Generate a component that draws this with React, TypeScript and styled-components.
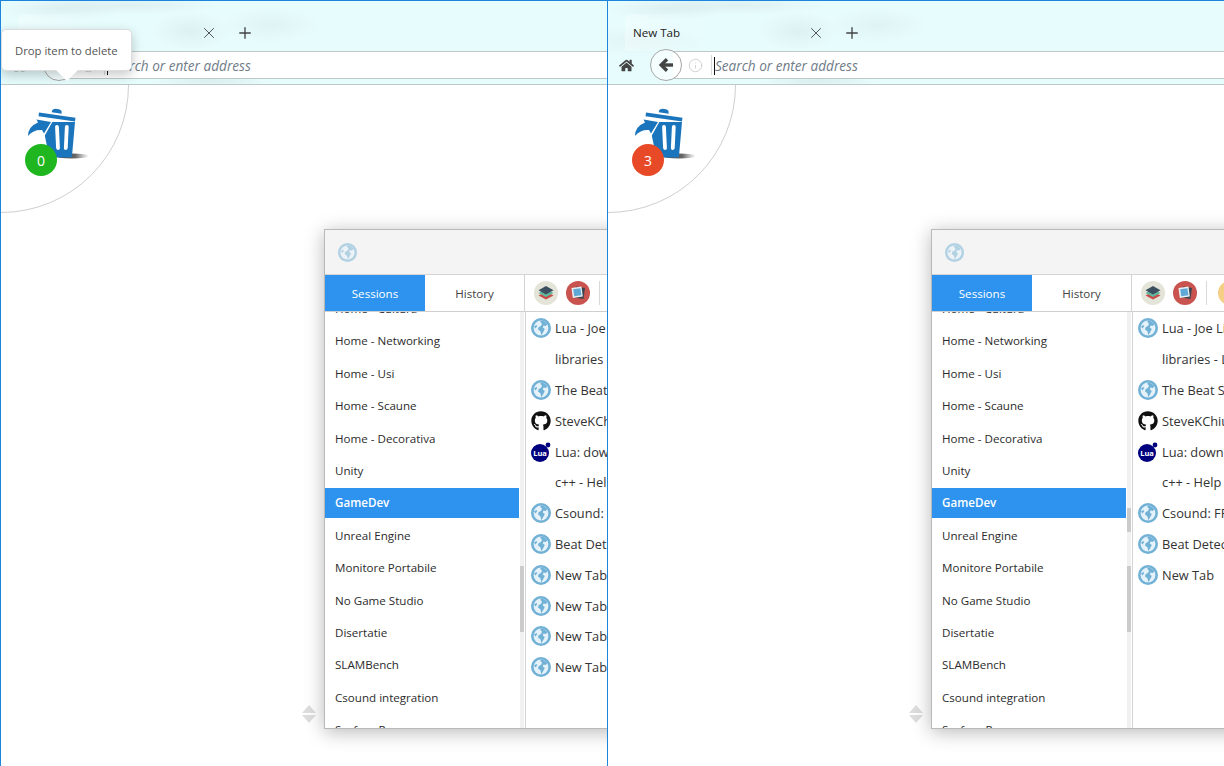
import React, { FC } from "react";
import styled, { createGlobalStyle } from "styled-components";
import { FaGithub, FaHome } from "react-icons/fa";
import { Info, Plus, X } from "lucide-react";

const blue = "#2e93ee";
const edge = "#1b84dc";

const GlobalStyle = createGlobalStyle`
  * { box-sizing: border-box; }
  html, body { margin: 0; height: 100%; overflow: hidden; background: #fff; }
  body { font-family: "Open Sans", "Liberation Sans", sans-serif; color: #333; }
`;

const Page = styled.div`
  display: grid;
  grid-template-columns: 607px 617px;
  height: 766px;
  width: 1224px;
`;

const Pane = styled.section`
  position: relative;
  display: flex;
  flex-direction: column;
  overflow: hidden;
  border-top: 1px solid ${edge};
  border-left: 1px solid ${edge};
`;

const Chrome = styled.header`
  flex: 0 0 84px;
  border-bottom: 1px solid #bccaca;
  background:
    radial-gradient(ellipse 60px 12px at 60px 8px, rgba(205, 220, 220, 0.35), transparent),
    radial-gradient(ellipse 40px 20px at 190px 30px, rgba(205, 220, 220, 0.35), transparent),
    radial-gradient(ellipse 90px 10px at 130px 4px, rgba(205, 220, 220, 0.35), transparent),
    radial-gradient(ellipse 50px 18px at 270px 24px, rgba(205, 222, 222, 0.3), transparent),
    radial-gradient(ellipse 70px 16px at 30px 40px, rgba(210, 226, 226, 0.3), transparent),
    radial-gradient(ellipse 60px 6px at 210px 80px, rgba(205, 220, 220, 0.45), transparent),
    #e7fcfd;
`;

const TabRow = styled.div`
  display: flex;
  align-items: flex-end;
  height: 50px;
`;

const Tab = styled.div`
  display: flex;
  align-items: center;
  justify-content: space-between;
  width: 200px;
  height: 37px;
  margin-left: 17px;
  padding: 0 0 0 8px;
  border-radius: 8px 8px 0 0;
  font-size: 11.6px;
  color: #222;
  background: linear-gradient(to right, rgba(255, 255, 255, 0.3), rgba(255, 255, 255, 0) 40%);
`;

const TabLabel = styled.span`
  margin-top: -1px;
`;

const NewTab = styled.div`
  display: flex;
  align-items: center;
  height: 37px;
  margin-left: 18px;
  color: #444;
`;

const AddressRow = styled.div`
  display: flex;
  align-items: center;
  height: 28px;
`;

const HomeButton = styled.div`
  display: flex;
  margin-left: 11px;
  color: #444;
`;

const BackButton = styled.div`
  position: relative;
  z-index: 1;
  display: flex;
  flex: 0 0 32px;
  align-items: center;
  justify-content: center;
  height: 32px;
  margin-left: 16px;
  border: 1px solid #a6a6a6;
  border-radius: 50%;
  color: #444;
  background: rgba(255, 255, 255, 0.55);
`;

const AddressField = styled.div`
  display: flex;
  flex: 1;
  align-items: center;
  height: 28px;
  margin-left: -9px;
  padding-left: 15px;
  border-top: 1px solid #bfc8c8;
  border-bottom: 1px solid #bfc8c8;
  background: #fff;
`;

const FieldDivider = styled.div`
  width: 1px;
  height: 20px;
  margin: 0 2px 0 8px;
  background: #d8d8d8;
`;

const Placeholder = styled.span`
  position: relative;
  top: 0.5px;
  border-left: 1px solid #111;
  font-size: 13.6px;
  font-style: italic;
  line-height: 18px;
  color: #6f7c88;
`;

const Desk = styled.main`
  position: relative;
  flex: 1;
  overflow: hidden;
  background: #fff;
`;

const Corner = styled.div`
  position: absolute;
  top: -128px;
  left: -128px;
  width: 256px;
  height: 256px;
  border: 1px solid #cfcfcf;
  border-radius: 50%;
`;

const TrashIcon = styled.svg`
  position: absolute;
  top: 20px;
  left: 24px;
`;

const Badge = styled.div<{ $count: number }>`
  position: absolute;
  top: 59px;
  left: 24px;
  display: flex;
  align-items: center;
  justify-content: center;
  width: 32px;
  height: 32px;
  border-radius: 50%;
  font-size: 14px;
  color: #fff;
  background: ${(p) => (p.$count > 0 ? "#e84a27" : "#1fb61f")};
`;

const Tooltip = styled.div`
  position: absolute;
  z-index: 3;
  top: 28px;
  left: 0;
  width: 131px;
  height: 42px;
  padding: 0 13px;
  border: 1px solid #dcdcdc;
  border-radius: 5px;
  font-size: 11.3px;
  line-height: 41px;
  white-space: nowrap;
  color: #555;
  background: #fff;
  box-shadow: 0 4px 12px rgba(0, 0, 0, 0.22);

  &::after {
    content: "";
    position: absolute;
    top: 40px;
    left: 54px;
    border-top: 11px solid #fff;
    border-right: 11px solid transparent;
    border-left: 11px solid transparent;
  }
`;

const Sorter = styled.svg`
  position: absolute;
  top: 619px;
  left: 300px;
`;

const Panel = styled.div`
  position: absolute;
  top: 144px;
  left: 323px;
  display: flex;
  flex-direction: column;
  width: 420px;
  height: 500px;
  border: 1px solid #b9b9b9;
  background: #fff;
  box-shadow: 0 3px 18px rgba(0, 0, 0, 0.28);
`;

const PanelTop = styled.div`
  display: flex;
  flex: 0 0 45px;
  align-items: center;
  padding-left: 13px;
  border-bottom: 1px solid #d4d4d4;
  background: #f4f4f4;
`;

const PanelTabs = styled.div`
  display: flex;
  flex: 0 0 37px;
  align-items: stretch;
  border-bottom: 1px solid #cfcfcf;
`;

const PanelTab = styled.div<{ $active?: boolean }>`
  display: flex;
  flex: 0 0 ${(p) => (p.$active ? 100 : 99)}px;
  align-items: center;
  justify-content: center;
  font-size: 11.6px;
  color: ${(p) => (p.$active ? "#fff" : "#444")};
  background: ${(p) => (p.$active ? blue : "#fff")};
`;

const Toolbar = styled.div`
  display: flex;
  flex: 1;
  align-items: center;
  gap: 8px;
  padding-left: 9px;
  border-left: 1px solid #d4d4d4;
`;

const ToolDivider = styled.div`
  width: 1px;
  height: 24px;
  margin: 0 3px 0 1px;
  background: #d8d8d8;
`;

const Tool = styled.div<{ $color: string }>`
  display: flex;
  flex: 0 0 24px;
  height: 24px;
  border-radius: 50%;
  background: ${(p) => p.$color};
`;

const PanelBody = styled.div`
  display: flex;
  flex: 1;
  min-height: 0;
`;

const SessionList = styled.ul`
  flex: 0 0 194px;
  margin: 0;
  padding: 0;
  overflow: hidden;
  list-style: none;
`;

const SessionRow = styled.li<{ $selected?: boolean; $first?: boolean }>`
  height: 30px;
  margin-top: ${(p) => (p.$first ? -18 : 0)}px;
  margin-bottom: 2.4px;
  padding-left: 10px;
  font-size: 11.6px;
  font-weight: ${(p) => (p.$selected ? 600 : 400)};
  line-height: 30px;
  white-space: nowrap;
  color: ${(p) => (p.$selected ? "#fff" : "#2c2c2c")};
  background: ${(p) => (p.$selected ? blue : "transparent")};
`;

const ScrollTrack = styled.div`
  display: flex;
  flex: 0 0 4px;
  flex-direction: column;
  margin-left: 1px;
  margin-right: 1px;
  background: #f1f1f1;
`;

const ScrollThumb = styled.div<{ $top: number; $height: number }>`
  flex: 0 0 ${(p) => p.$height}px;
  margin-top: ${(p) => p.$top}px;
  background: #cbcbcb;
`;

const TabList = styled.ul`
  flex: 1;
  margin: 0;
  padding: 1px 0 0 5px;
  overflow: hidden;
  border-left: 1px solid #d4d4d4;
  list-style: none;
`;

const TabItem = styled.li`
  display: flex;
  align-items: center;
  gap: 4px;
  height: 30.8px;
  font-size: 12.8px;
  white-space: nowrap;
  color: #333;
`;

const IconSlot = styled.span`
  display: flex;
  flex: 0 0 20px;
  align-items: center;
  justify-content: center;
  height: 20px;
  color: #111;
`;

const Faded = styled.span`
  display: flex;
  opacity: 0.5;
`;

type IconKind = "globe" | "github" | "lua" | "none";

const sessions = [
  "Home - Cultura",
  "Home - Networking",
  "Home - Usi",
  "Home - Scaune",
  "Home - Decorativa",
  "Unity",
  "GameDev",
  "Unreal Engine",
  "Monitore Portabile",
  "No Game Studio",
  "Disertatie",
  "SLAMBench",
  "Csound integration",
  "Surface Pro",
];

const savedTabs: { icon: IconKind; title: string }[] = [
  { icon: "globe", title: "Lua - Joe Library" },
  { icon: "none", title: "libraries - Lua" },
  { icon: "globe", title: "The Beat Spectrum" },
  { icon: "github", title: "SteveKChiu/lua" },
  { icon: "lua", title: "Lua: download" },
  { icon: "none", title: "c++ - Help" },
  { icon: "globe", title: "Csound: FFT" },
  { icon: "globe", title: "Beat Detection" },
];

const Globe: FC<{ size?: number }> = ({ size = 20 }) => (
  <svg width={size} height={size} viewBox="0 0 20 20">
    <circle cx="10" cy="10" r="10" fill="#72b1d6" />
    <circle cx="10" cy="10" r="7.4" fill="#e6f2f9" />
    <path
      d="M10 2.6c2.6.2 5 1.6 6.3 3.6l-1.5 1.700-2.300-.3-.7 2 2 1.500-1.800 3.400-1.600 2.700-1-3.900-2.400-1.800.6-2.300 2.600-1.400.8-2.400L9.200 4z"
      fill="#72b1d6"
    />
    <path d="M3 8.500l2.300-1.500 1 1-1.800 2.600z" fill="#72b1d6" />
  </svg>
);

const LuaIcon: FC = () => (
  <svg width="20" height="20" viewBox="0 0 20 20">
    <circle cx="9" cy="11" r="9" fill="#00007f" />
    <circle cx="17" cy="3" r="2.400" fill="#00007f" />
    <text x="9" y="14" fontSize="7.500" fontWeight="700" textAnchor="middle" fill="#fff">
      Lua
    </text>
  </svg>
);

const ItemIcon: FC<{ kind: IconKind }> = ({ kind }) => {
  if (kind === "none") return <IconSlot />;
  return (
    <IconSlot>
      {kind === "globe" && <Globe />}
      {kind === "github" && <FaGithub size={20} />}
      {kind === "lua" && <LuaIcon />}
    </IconSlot>
  );
};

const BackArrow: FC = () => (
  <svg width="16" height="16" viewBox="0 0 16 16" fill="none" stroke="#444" strokeWidth="3.400">
    <path d="M15 8H4" />
    <path d="M9 2.200 3.200 8 9 13.800" />
  </svg>
);

const LayersGlyph: FC = () => (
  <svg width="24" height="24" viewBox="0 0 24 24">
    <path d="M12 10.500l7.500 4-7.500 4-7.500-4z" fill="#c84c47" />
    <path d="M12 8l7.500 4-7.500 4-7.500-4z" fill="#62b8a0" />
    <path d="M12 5l7.500 4.200-7.500 4.200-7.500-4.200z" fill="#3b4f60" />
  </svg>
);

const PhotoGlyph: FC = () => (
  <svg width="24" height="24" viewBox="0 0 24 24">
    <path d="M10 5.500l9 1.500-1.500 11-9-1.500z" fill="#3c4650" />
    <path d="M5.500 7l10-1.500 1.300 10-10 1.500z" fill="#e9eef0" />
    <path d="M7.200 8.300l7.200-1 1 7-7.200 1z" fill="#5ea9d6" />
  </svg>
);

const Trash: FC = () => (
  <TrashIcon width="66" height="56" viewBox="25 105 66 56">
    <defs>
      <linearGradient id="trash-shadow" x1="0" x2="1" y1="0" y2="0">
        <stop offset="0" stopColor="#444" />
        <stop offset="0.6" stopColor="#666" />
        <stop offset="1" stopColor="#888" stopOpacity="0" />
      </linearGradient>
    </defs>
    <ellipse cx="72" cy="156" rx="17" ry="2.400" fill="url(#trash-shadow)" />
    <path d="M42 122h33l-3 34q-.3 1.500-2 1.500H51q-1.700 0-2-1.500z" fill="#1b75bc" />
    <path d="M39 120l15-1-9.500 17-4.500-1z" fill="#fff" />
    <path d="M39 112.500l36.500 5.300-.5 3.700-36.500-5.300z" fill="#1b75bc" />
    <path d="M52 110.500q1-2 5-1.600t4.500 2.200l.2 2.600-9.900-1.400z" fill="#1b75bc" />
    <path d="M57 127l1 21M66.800 127l-1 21" stroke="#fff" strokeWidth="3.800" strokeLinecap="round" />
    <path d="M28 136q0-9.500 10-13.500l-1.500-3 14.500 2.500-7 11.500-2-3.400q-8-.8-14 5.900z" fill="#1b75bc" />
  </TrashIcon>
);

const WindowPane: FC<{ count: number; extraTabs: number; tooltip?: boolean; thumbs: [number, number][] }> = ({
  count,
  extraTabs,
  tooltip,
  thumbs,
}) => (
  <Pane>
    <Chrome>
      <TabRow>
        <Tab>
          <TabLabel>New Tab</TabLabel>
          <X size={18} strokeWidth={1} />
        </Tab>
        <NewTab>
          <Plus size={18} strokeWidth={1.8} />
        </NewTab>
      </TabRow>
      <AddressRow>
        <HomeButton>
          <FaHome size={15} />
        </HomeButton>
        <BackButton>
          <BackArrow />
        </BackButton>
        <AddressField>
          <Info size={15} strokeWidth={1.2} color="#c4c4c4" />
          <FieldDivider />
          <Placeholder>Search or enter address</Placeholder>
        </AddressField>
      </AddressRow>
    </Chrome>
    <Desk>
      <Corner />
      <Trash />
      <Badge $count={count}>{count}</Badge>
      <Sorter width="16" height="20" viewBox="0 0 16 20">
        <path d="M8 1l7 8H1zM1 11h14l-7 8z" fill="#dedede" />
      </Sorter>
      <Panel>
        <PanelTop>
          <Faded>
            <Globe size={19} />
          </Faded>
        </PanelTop>
        <PanelTabs>
          <PanelTab $active>Sessions</PanelTab>
          <PanelTab>History</PanelTab>
          <Toolbar>
            <Tool $color="#e4e4d8">
              <LayersGlyph />
            </Tool>
            <Tool $color="#c9544f">
              <PhotoGlyph />
            </Tool>
            <ToolDivider />
            <Tool $color="#f5cf85" />
          </Toolbar>
        </PanelTabs>
        <PanelBody>
          <SessionList>
            {sessions.map((name, i) => (
              <SessionRow key={name} $first={i === 0} $selected={name === "GameDev"}>
                {name}
              </SessionRow>
            ))}
          </SessionList>
          <ScrollTrack>
            {thumbs.map(([top, height]) => (
              <ScrollThumb key={top} $top={top} $height={height} />
            ))}
          </ScrollTrack>
          <TabList>
            {savedTabs.map((item) => (
              <TabItem key={item.title}>
                <ItemIcon kind={item.icon} />
                {item.title}
              </TabItem>
            ))}
            {Array.from({ length: extraTabs }, (_, i) => (
              <TabItem key={i}>
                <ItemIcon kind="globe" />
                New Tab
              </TabItem>
            ))}
          </TabList>
        </PanelBody>
      </Panel>
    </Desk>
    {tooltip && <Tooltip>Drop item to delete</Tooltip>}
  </Pane>
);

export default function App() {
  return (
    <Page>
      <GlobalStyle />
      <WindowPane count={0} extraTabs={4} tooltip thumbs={[[254, 66]]} />
      <WindowPane count={3} extraTabs={1} thumbs={[[196, 24], [34, 66]]} />
    </Page>
  );
}
